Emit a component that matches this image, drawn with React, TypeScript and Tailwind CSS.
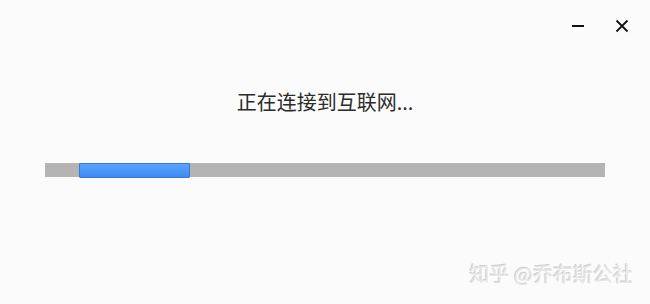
export default function App() {
  return (
    <div
      className="relative flex h-[304px] w-[650px] flex-col bg-[#fbfbfb] text-[#2b2b2b]"
      style={{ fontFamily: '"Noto Sans CJK SC", "Liberation Sans", sans-serif' }}
    >
      {/* window controls */}
      <div className="flex h-[44px] items-center justify-end gap-[31px] pr-[21px] pt-[8px]">
        <div className="h-[2px] w-[12px] bg-[#111]" />
        <svg width="14" height="14" viewBox="0 0 14 14" className="text-[#111]">
          <path d="M1.5 1.5 L12.5 12.5 M12.5 1.5 L1.5 12.5" stroke="currentColor" strokeWidth="1.8" />
        </svg>
      </div>

      <div className="mt-[45px] text-center text-[20px] leading-[26px]">
        正在连接到互联网...
      </div>

      <div className="mx-[45px] mt-[48px] flex h-[14px] bg-[#b4b4b4]">
        <div className="ml-[34px] h-[15px] w-[111px] rounded-[1px] border border-[#3a78d8] bg-gradient-to-b from-[#5aa3ff] to-[#3d8af2]" />
      </div>

      <div
        className="absolute bottom-[17px] right-[17px] text-[20px] leading-[26px] text-[#e6e6e6]"
        style={{ textShadow: '1px 1px 0 #ffffff, -1px -1px 0 #d0d0d0' }}
      >
        知乎 @乔布斯公社
      </div>
    </div>
  )
}
